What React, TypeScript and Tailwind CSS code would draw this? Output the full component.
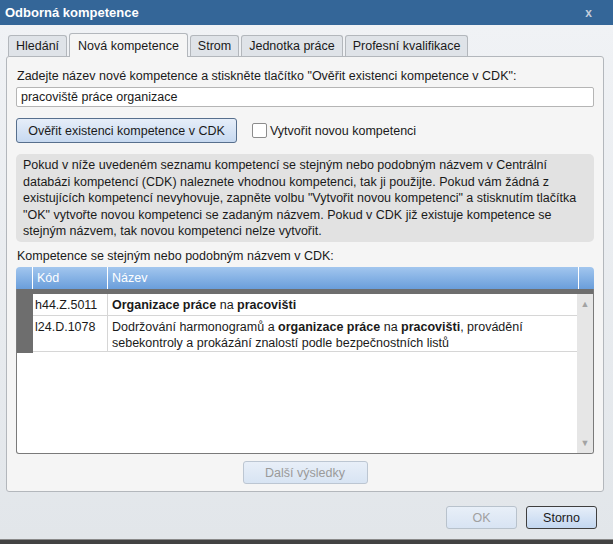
import React from "react";

const tabs = ["Hledání", "Nová kompetence", "Strom", "Jednotka práce", "Profesní kvalifikace"];

function Tab({ label, active }: { label: string; active: boolean }) {
  if (active) {
    return (
      <div className="relative z-10 -mb-px flex h-[24px] items-center rounded-t-[3px] border border-b-0 border-[#b3b7bc] bg-[#f5f5f5] px-[8px]">
        {label}
      </div>
    );
  }
  return (
    <div className="flex h-[21px] items-center rounded-t-[3px] border border-b-0 border-[#b3b7bc] bg-[#dfe3e8] px-[7px]">
      {label}
    </div>
  );
}

function GridRow({
  code,
  children,
  tall,
}: {
  code: string;
  children: React.ReactNode;
  tall?: boolean;
}) {
  return (
    <div className={`flex border-b border-[#d6d6d6] ${tall ? "h-[36px]" : "h-[22px]"}`}>
      <div className="w-[75px] shrink-0 border-r border-[#d6d6d6] px-[2px] pt-[3px]">{code}</div>
      <div className="flex-1 px-[4px] pt-[3px]">{children}</div>
    </div>
  );
}

export default function App() {
  return (
    <div className="flex h-[544px] w-[613px] flex-col overflow-hidden font-['Liberation_Sans',Arial,sans-serif] text-[12.5px] leading-[16px] text-[#1a1a1a]">
      {/* Title bar */}
      <div className="flex h-[25px] shrink-0 items-center justify-between bg-[#346698] pl-[5px] pr-[21px] text-[13px] text-white">
        <span className="font-bold">Odborná kompetence</span>
        <span className="text-[12px] font-bold text-[#c2cddb]">x</span>
      </div>

      {/* Window body */}
      <div className="flex flex-1 flex-col bg-gradient-to-b from-[#f0f2f5] to-[#e2e6ea] pl-[6px] pr-[9px] pt-[8px]">
        {/* Tabs */}
        <div className="flex h-[23px] items-end gap-[2px] pl-[2px]">
          {tabs.map((t) => (
            <Tab key={t} label={t} active={t === "Nová kompetence"} />
          ))}
        </div>

        {/* Panel */}
        <div className="flex h-[436px] flex-col rounded-[3px] border border-[#b3b7bc] bg-[#f5f5f5] px-[9px] pt-[11px]">
          <div className="pl-[1px]">
            Zadejte název nové kompetence a stiskněte tlačítko "Ověřit existenci kompetence v CDK":
          </div>
          <div className="mt-[3px] flex h-[20px] items-center rounded-[2px] border border-[#b5b5b5] bg-white px-[4px]">
            pracoviště práce organizace
          </div>

          <div className="mt-[11px] flex items-center">
            <button className="flex h-[25px] w-[221px] items-center justify-center rounded-[3px] border border-[#576f8d] bg-gradient-to-b from-[#e6eef9] to-[#c7d9f0] text-[#1a1a1a]">
              Ověřit existenci kompetence v CDK
            </button>
            <div className="ml-[15px] h-[15px] w-[15px] rounded-[2px] border border-[#8c8c8c] bg-white" />
            <span className="ml-[3px]">Vytvořit novou kompetenci</span>
          </div>

          <div className="mt-[11px] h-[88px] whitespace-nowrap rounded-[5px] bg-[#e2e2e2] px-[7px] py-[3px] leading-[16.5px]">
            Pokud v níže uvedeném seznamu kompetencí se stejným nebo podobným názvem v Centrální
            <br />
            databázi kompetencí (CDK) naleznete vhodnou kompetenci, tak ji použijte. Pokud vám žádná z
            <br />
            existujících kompetencí nevyhovuje, zapněte volbu "Vytvořit novou kompetenci" a stisknutím tlačítka
            <br />
            "OK" vytvořte novou kompetenci se zadaným názvem. Pokud v CDK již existuje kompetence se
            <br />
            stejným názvem, tak novou kompetenci nelze vytvořit.
          </div>

          <div className="mt-[6px] pl-[1px]">Kompetence se stejným nebo podobným názvem v CDK:</div>

          {/* Grid */}
          <div className="mt-[3px] flex h-[187px] flex-col">
            <div className="flex h-[22px] shrink-0 overflow-hidden rounded-t-[4px] bg-gradient-to-b from-[#a2c6ee] to-[#6a9edb] text-white">
              <div className="w-[17px] shrink-0 border-r border-white" />
              <div className="flex w-[75px] shrink-0 items-center border-r border-white px-[4px]">Kód</div>
              <div className="flex flex-1 items-center px-[4px]">Název</div>
              <div className="w-[16px] shrink-0 border-l border-white" />
            </div>
            <div className="flex flex-1 overflow-hidden rounded-b-[3px] border border-t-0 border-[#7a7a7a] bg-white">
              <div className="w-[16px] shrink-0">
                <div className="h-[64px] bg-[#6e6e6e]" />
              </div>
              <div className="flex flex-1 flex-col">
                <div className="h-[5px] bg-[#6e6e6e]" />
                <div className="flex flex-1">
                  <div className="flex-1">
                    <GridRow code="h44.Z.5011">
                      <b>Organizace práce</b> na <b>pracovišti</b>
                    </GridRow>
                    <GridRow code="l24.D.1078" tall>
                      Dodržování harmonogramů a <b>organizace práce</b> na <b>pracovišti</b>, provádění
                      <br />
                      sebekontroly a prokázání znalostí podle bezpečnostních listů
                    </GridRow>
                  </div>
                  <div className="flex w-[16px] shrink-0 flex-col items-center justify-between bg-[#e6e6e6] py-[4px] text-[9px] leading-[12px] text-[#a3a3a3]">
                    <span>▲</span>
                    <span>▼</span>
                  </div>
                </div>
              </div>
            </div>
          </div>

          <div className="mt-[7px] flex justify-center">
            <button className="flex h-[23px] w-[125px] items-center justify-center rounded-[3px] border border-[#bcc6d2] bg-gradient-to-b from-[#e8eff8] to-[#d8e4f3] text-[#9a9a9a]">
              Další výsledky
            </button>
          </div>
        </div>

        {/* Footer buttons */}
        <div className="flex justify-end gap-[9px] pr-[7px] pt-[14px]">
          <button className="flex h-[23px] w-[71px] items-center justify-center rounded-[3px] border border-[#b8c2cc] bg-gradient-to-b from-[#e8eff8] to-[#d8e4f3] text-[#a0a0a0]">
            OK
          </button>
          <button className="flex h-[23px] w-[71px] items-center justify-center rounded-[3px] border border-[#3f3f3f] bg-gradient-to-b from-[#e6eef9] to-[#c3d7f0] text-[#1a1a1a]">
            Storno
          </button>
        </div>
      </div>

      {/* Dark strip behind the window */}
      <div className="h-[5px] shrink-0 border-t border-[#8a8a8a] bg-[#424242]" />
    </div>
  );
}
